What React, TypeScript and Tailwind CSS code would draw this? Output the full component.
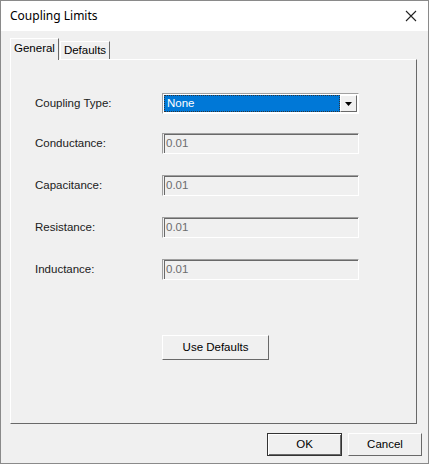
export default function App() {
  const rows = [
    ["Conductance:", "0.01"],
    ["Capacitance:", "0.01"],
    ["Resistance:", "0.01"],
    ["Inductance:", "0.01"],
  ];
  return (
    <div className="w-[429px] h-[464px] bg-[#f0f0f0] border border-[#8a8a8a] flex flex-col overflow-hidden text-[11.5px] text-black" style={{ fontFamily: '"Liberation Sans", Arial, sans-serif' }}>
      <div className="h-[30px] bg-white flex items-center justify-between pl-[9px] pr-[10px] shrink-0">
        <span className="text-[12px]" style={{ fontFamily: '"Noto Sans", sans-serif' }}>Coupling Limits</span>
        <svg width="12" height="12" viewBox="0 0 12 12" className="mr-[1px]"><path d="M1 1L11 11M11 1L1 11" stroke="#222" strokeWidth="1.1" /></svg>
      </div>
      <div className="pl-[9px] pr-[11px] pt-[6px] flex flex-col">
        <div className="flex items-end h-[22px]">
          <div className="h-[22px] px-[3px] bg-[#f0f0f0] border-l border-t border-r border-white border-r-[#696969] flex items-center relative z-10 -mb-[1px] pb-[2px]">General</div>
          <div className="h-[18px] ml-[1px] px-[3px] border-l border-t border-r border-white border-r-[#696969] flex items-center pt-[1px]">Defaults</div>
        </div>
        <div className="h-[365px] border border-white border-r-[#696969] border-b-[#696969] flex flex-col pl-[24px] pt-[33px]">
          <div className="flex items-center h-[21px]">
            <span className="w-[127px] text-[#202020]">Coupling Type:</span>
            <div className="w-[197px] h-[21px] border border-[#a0a0a0] border-b-white border-r-white p-[1px] bg-white flex">
              <div className="flex-1 bg-[#0078d7] text-white flex items-center pl-[2px] border border-dotted border-[#333]">None</div>
              <div className="w-[17px] bg-[#f0f0f0] border border-white border-r-[#696969] border-b-[#696969] flex items-center justify-center">
                <svg width="7" height="4" viewBox="0 0 7 4"><path d="M0 0H7L3.5 4Z" fill="#000" /></svg>
              </div>
            </div>
          </div>
          {rows.map(([l, v], i) => (
            <div key={l} className={`flex items-center h-[21px] ${i === 0 ? "mt-[19px]" : "mt-[21px]"}`}>
              <span className="w-[127px] text-[#202020]">{l}</span>
              <div className="w-[197px] h-[21px] border border-[#a0a0a0] border-b-white border-r-white flex items-center pl-[1px] text-[#6d6d6d] bg-[#f0f0f0]">
                <div className="border-t border-l border-[#696969] w-full h-full flex items-center pl-[1px]">{v}</div>
              </div>
            </div>
          ))}
          <div className="mt-[55px] ml-[127px] w-[107px] h-[25px] border border-white border-r-[#696969] border-b-[#696969] bg-[#f0f0f0] flex items-center justify-center">Use Defaults</div>
        </div>
        <div className="flex justify-end gap-[6px] mt-[9px] -mr-[5px]">
          <div className="w-[75px] h-[23px] border border-[#333] bg-[#f0f0f0] flex items-center justify-center shadow-[inset_1px_1px_0_#fff,inset_-1px_-1px_0_#696969]">OK</div>
          <div className="w-[74px] h-[23px] border border-white border-r-[#696969] border-b-[#696969] bg-[#f0f0f0] flex items-center justify-center">Cancel</div>
        </div>
      </div>
    </div>
  );
}
